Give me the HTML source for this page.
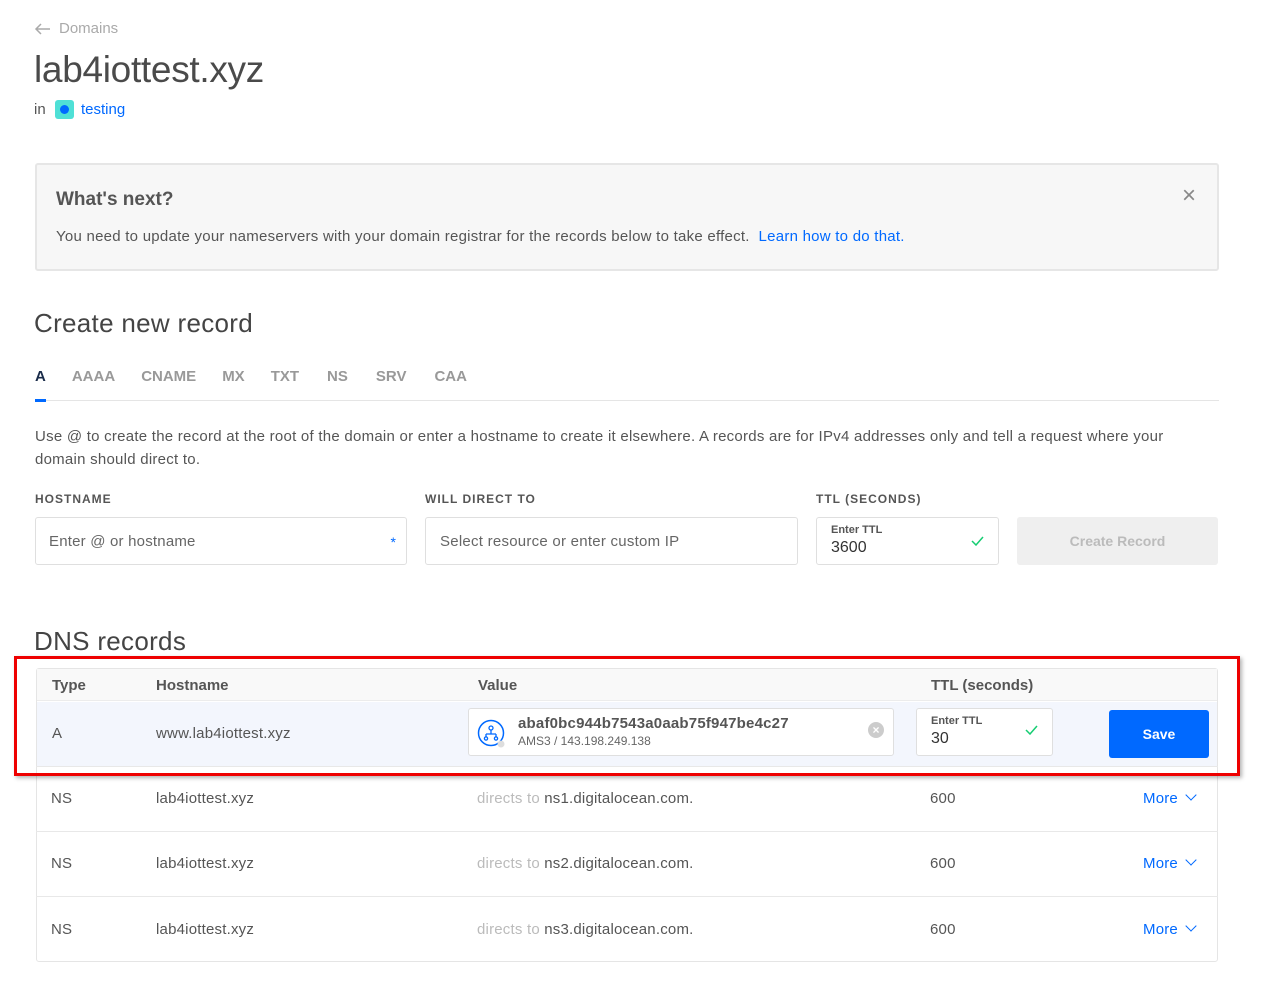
<!DOCTYPE html>
<html><head><meta charset="utf-8"><style>
*{box-sizing:border-box;margin:0;padding:0}
body{width:1279px;height:997px;background:#fff;font-family:"Liberation Sans",sans-serif;color:#444;position:relative;overflow:hidden}
.a{position:absolute;white-space:nowrap}
.blue{color:#0069ff}
.inp{position:absolute;border:1px solid #dfdfdf;border-radius:3px;background:#fff}
.row{position:absolute;left:36px;width:1182px;border-top:1px solid #e8e8e8;font-size:15px;color:#555;letter-spacing:0.2px}
.chev{display:inline-block;width:8px;height:8px;border-right:1.5px solid #0069ff;border-bottom:1.5px solid #0069ff;transform:rotate(45deg);margin-left:9px;position:relative;top:-4px}
</style></head><body>
<svg class="a" style="left:34px;top:22px" width="17" height="14" viewBox="0 0 17 14"><path d="M16 7H2M7 2L2 7l5 5" stroke="#aaa" stroke-width="1.5" fill="none"/></svg>
<div class="a" style="left:59px;top:20px;font-size:15px;color:#aaa">Domains</div>
<div class="a" style="left:34px;top:49px;font-size:37px;color:#4a4a4a;letter-spacing:-0.3px">lab4iottest.xyz</div>
<div class="a" style="left:34px;top:101px;font-size:15px;color:#555">in</div>
<div class="a" style="left:55px;top:100px;width:19px;height:19px;background:#4fe0d6;border-radius:3px"><div style="margin:5px;width:9px;height:9px;border-radius:50%;background:#0069ff"></div></div>
<div class="a blue" style="left:81px;top:101px;font-size:15px">testing</div>

<div class="a" style="left:35px;top:163px;width:1184px;height:108px;background:#f7f7f7;border:2px solid #e6e6e6;border-radius:3px"></div>
<div class="a" style="left:56px;top:189px;font-size:19px;font-weight:bold;color:#555">What's next?</div>
<div class="a" style="left:1182px;top:182px;font-size:24px;color:#888">×</div>
<div class="a" style="left:56px;top:228px;font-size:15px;color:#555;letter-spacing:0.25px">You need to update your nameservers with your domain registrar for the records below to take effect. &nbsp;<span class="blue">Learn how to do that.</span></div>

<div class="a" style="left:34px;top:308px;font-size:26px;color:#444;letter-spacing:0.3px">Create new record</div>
<div class="a" style="left:35px;top:368px;font-size:15px;font-weight:bold;color:#999">
<span style="color:#1a2c4a">A</span><span style="margin-left:26px">AAAA</span><span style="margin-left:26px">CNAME</span><span style="margin-left:26px">MX</span><span style="margin-left:26px">TXT</span><span style="margin-left:28px">NS</span><span style="margin-left:28px">SRV</span><span style="margin-left:28px">CAA</span></div>
<div class="a" style="left:35px;top:400px;width:1184px;height:1px;background:#e5e5e5"></div>
<div class="a" style="left:35px;top:399px;width:11px;height:3px;background:#0069ff"></div>
<div class="a" style="left:35px;top:425px;font-size:15px;color:#555;line-height:23px;white-space:normal;width:1160px;letter-spacing:0.25px">Use @ to create the record at the root of the domain or enter a hostname to create it elsewhere. A records are for IPv4 addresses only and tell a request where your domain should direct to.</div>
<div class="a" style="left:35px;top:492px;font-size:12px;font-weight:bold;letter-spacing:1px;color:#555">HOSTNAME</div>
<div class="a" style="left:425px;top:492px;font-size:12px;font-weight:bold;letter-spacing:1px;color:#555">WILL DIRECT TO</div>
<div class="a" style="left:816px;top:492px;font-size:12px;font-weight:bold;letter-spacing:1px;color:#555">TTL (SECONDS)</div>
<div class="inp" style="left:35px;top:517px;width:372px;height:48px"><span class="a" style="left:13px;top:15px;font-size:15px;color:#666;letter-spacing:0.2px">Enter @ or hostname</span><span class="a blue" style="right:10px;top:16px;font-size:14px">*</span></div>
<div class="inp" style="left:425px;top:517px;width:373px;height:48px"><span class="a" style="left:14px;top:15px;font-size:15px;color:#666;letter-spacing:0.25px">Select resource or enter custom IP</span></div>
<div class="inp" style="left:816px;top:517px;width:183px;height:48px"><span class="a" style="left:14px;top:6px;font-size:11px;font-weight:bold;color:#555">Enter TTL</span><span class="a" style="left:14px;top:21px;font-size:16px;color:#333">3600</span>
<svg class="a" style="right:14px;top:18px" width="13" height="10" viewBox="0 0 13 10"><path d="M1 5l4 4 7-8" stroke="#15cd72" stroke-width="1.5" fill="none"/></svg></div>
<div class="a" style="left:1017px;top:517px;width:201px;height:48px;background:#efefef;border-radius:3px;text-align:center;line-height:48px;font-size:14px;font-weight:bold;color:#bbb">Create Record</div>

<div class="a" style="left:34px;top:626px;font-size:26px;color:#444;letter-spacing:0.3px">DNS records</div>
<div class="a" style="left:36px;top:668px;width:1182px;height:294px;border:1px solid #e5e5e5;border-radius:3px"></div>
<div class="a" style="left:37px;top:669px;width:1180px;height:32px;background:#f9f9f9;border-bottom:1px solid #ececec"></div>
<div class="a" style="left:52px;top:677px;font-size:15px;font-weight:bold;color:#555">Type</div>
<div class="a" style="left:156px;top:677px;font-size:15px;font-weight:bold;color:#555">Hostname</div>
<div class="a" style="left:478px;top:677px;font-size:15px;font-weight:bold;color:#555">Value</div>
<div class="a" style="left:931px;top:677px;font-size:15px;font-weight:bold;color:#555">TTL (seconds)</div>
<div class="a" style="left:37px;top:702px;width:1180px;height:64px;background:#f3f6fd"></div>
<div class="a" style="left:52px;top:725px;font-size:15px;color:#555">A</div>
<div class="a" style="left:156px;top:725px;font-size:15px;color:#555;letter-spacing:0.2px">www.lab4iottest.xyz</div>
<div class="inp" style="left:468px;top:708px;width:426px;height:48px">
<svg class="a" style="left:8px;top:10px" width="30" height="30" viewBox="0 0 30 30"><circle cx="14" cy="14" r="12.5" fill="#fff" stroke="#0069ff" stroke-width="1.5"/><circle cx="14" cy="9" r="2" fill="none" stroke="#0069ff" stroke-width="1.3"/><path d="M14 11v4M9 15h10M9 15v3M19 15v3" stroke="#0069ff" stroke-width="1.3" fill="none"/><circle cx="9" cy="19.5" r="1.6" fill="none" stroke="#0069ff" stroke-width="1.3"/><circle cx="19" cy="19.5" r="1.6" fill="none" stroke="#0069ff" stroke-width="1.3"/><circle cx="24" cy="25" r="3.5" fill="#ddd"/></svg>
<span class="a" style="left:49px;top:6px;font-size:15px;font-weight:bold;color:#555;letter-spacing:0.2px">abaf0bc944b7543a0aab75f947be4c27</span>
<span class="a" style="left:49px;top:25px;font-size:12px;color:#666">AMS3 / 143.198.249.138</span>
<span class="a" style="left:399px;top:13px;width:16px;height:16px;border-radius:50%;background:#ccc;color:#fff;font-size:12px;text-align:center;line-height:16px;font-weight:bold">×</span></div>
<div class="inp" style="left:916px;top:708px;width:137px;height:48px"><span class="a" style="left:14px;top:6px;font-size:11px;font-weight:bold;color:#555">Enter TTL</span><span class="a" style="left:14px;top:21px;font-size:16px;color:#333">30</span>
<svg class="a" style="right:14px;top:16px" width="13" height="10" viewBox="0 0 13 10"><path d="M1 5l4 4 7-8" stroke="#15cd72" stroke-width="1.5" fill="none"/></svg></div>
<div class="a" style="left:1109px;top:710px;width:100px;height:48px;background:#0069ff;border-radius:3px;color:#fff;font-weight:bold;font-size:14px;text-align:center;line-height:48px">Save</div>

<div class="row" style="top:766px;height:65px"><span class="a" style="left:15px;top:23px">NS</span><span class="a" style="left:120px;top:23px">lab4iottest.xyz</span><span class="a" style="left:441px;top:23px"><span style="color:#bbb">directs to</span> ns1.digitalocean.com.</span><span class="a" style="left:894px;top:23px">600</span><span class="a blue" style="left:1107px;top:23px">More<i class="chev"></i></span></div>
<div class="row" style="top:831px;height:65px"><span class="a" style="left:15px;top:23px">NS</span><span class="a" style="left:120px;top:23px">lab4iottest.xyz</span><span class="a" style="left:441px;top:23px"><span style="color:#bbb">directs to</span> ns2.digitalocean.com.</span><span class="a" style="left:894px;top:23px">600</span><span class="a blue" style="left:1107px;top:23px">More<i class="chev"></i></span></div>
<div class="row" style="top:896px;height:65px"><span class="a" style="left:15px;top:24px">NS</span><span class="a" style="left:120px;top:24px">lab4iottest.xyz</span><span class="a" style="left:441px;top:24px"><span style="color:#bbb">directs to</span> ns3.digitalocean.com.</span><span class="a" style="left:894px;top:24px">600</span><span class="a blue" style="left:1107px;top:24px">More<i class="chev"></i></span></div>

<div class="a" style="left:14px;top:656px;width:1226px;height:120px;border:3px solid #e00;box-shadow:2px 2px 4px rgba(0,0,0,.3)"></div>
</body></html>
